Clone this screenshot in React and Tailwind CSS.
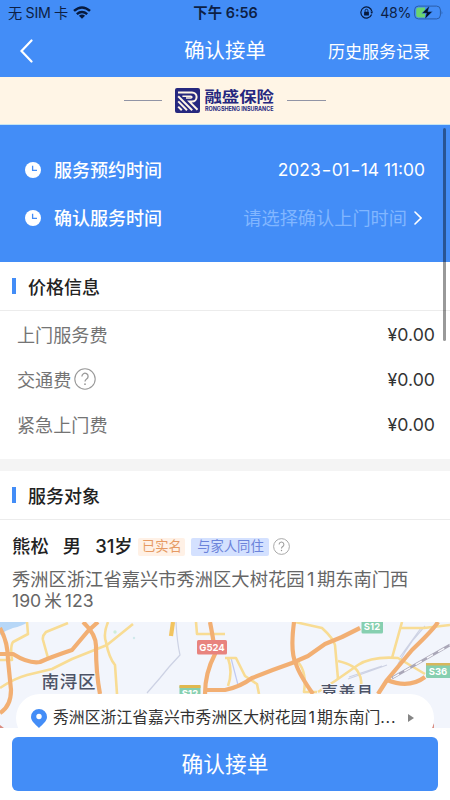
function StatusBar() {
  return (
    <div className="grid grid-cols-3 items-center h-[26px] pl-2 pr-[7px] text-[#0d1f45]">
      <div className="flex items-center">
        <span className="w-[65px] text-[14.2px] tracking-[-0.3px] whitespace-nowrap">无 SIM 卡</span>
        <svg viewBox="0 0 18 13" className="w-[18px] h-[13px] shrink-0" fill="none" stroke="#071a3d" strokeWidth="2.5">
          <path d="M1 4.9Q9 -2 17 4.9" />
          <path d="M3.8 8.1Q9 3.8 14.2 8.1" />
          <path d="M9 12.8L5.9 9.7Q9 7.4 12.1 9.7Z" fill="#071a3d" stroke="none" />
        </svg>
      </div>
      <div className="text-center text-[14.4px] font-semibold whitespace-nowrap">下午 6:56</div>
      <div className="flex items-center justify-end">
        <svg viewBox="0 0 14 14" className="w-[13px] h-[13px] mr-[7px]" fill="none" stroke="#071a3d" strokeWidth="1.3">
          <path d="M12.5 9.2A6 6 0 1 1 12.8 5.7" />
          <path d="M11 6.2L12.9 8.6L14 5.8Z" fill="#071a3d" stroke="none" />
          <rect x="4.4" y="6.2" width="5.2" height="4" rx=".6" fill="#071a3d" stroke="none" />
          <path d="M5.5 6.3V5A1.5 1.5 0 0 1 8.5 5V6.3" strokeWidth="1" />
        </svg>
        <span className="text-[14.2px] tracking-[-0.4px] mr-[3px]">48%</span>
        <svg viewBox="0 0 29 15" className="w-[29px] h-[15px]">
          <rect x=".6" y="1.1" width="25.8" height="12.8" rx="3.8" fill="none" stroke="#2a5da8" strokeWidth="1" />
          <path d="M5 2.6H11V12.4H5A2.5 2.5 0 0 1 2.2 9.8V5.2A2.5 2.5 0 0 1 5 2.6Z" fill="#6bd36f" />
          <path d="M27.6 5.5Q29 7.5 27.6 9.5Z" fill="#2a5da8" />
          <path d="M15.8 .6L7.8 8.3H12.4L10.6 14.4L18.6 6.6H13.9Z" fill="#061328" stroke="#438df7" strokeWidth=".5" />
        </svg>
      </div>
    </div>
  );
}

function Brand() {
  return (
    <div className="flex items-center justify-center h-[48px] bg-[#fff5e6] border-b border-[#c5e5f2]">
      <span className="w-[38px] h-px bg-[#9194a5] mr-[13px]" />
      {/* Logo: mark and word mark */}
      <svg viewBox="0 -6 103 37" className="w-[103px] h-[37px] -mr-1">
        <rect width="25" height="25" rx="2" fill="#26287f" />
        <g fill="none" stroke="#fff5e6" strokeWidth="2">
          <path d="M3 4.4H17A4.6 4.6 0 0 1 17 13.6H14.4L22.5 21.8" />
          <path d="M3.2 8.2L17.2 22.2" />
          <path d="M7.4 8.2H15.8Q18 9 15.8 10H11" strokeWidth="1.6" />
          <path d="M3.2 13.4L12 22.2" />
          <path d="M3.2 18.6L6.8 22.2" />
        </g>
        <g fill="#26287f" fontWeight="700">
          <text x="29.5" y="14" fontSize="14.6" textLength="69.5" lengthAdjust="spacingAndGlyphs">融盛保险</text>
          <text x="30" y="22.6" fontSize="5.6" textLength="68.5" lengthAdjust="spacingAndGlyphs">RONGSHENG INSURANCE</text>
        </g>
      </svg>
      <span className="w-[39px] h-px bg-[#9194a5] ml-[13px]" />
    </div>
  );
}

const FEES = [
  { label: "上门服务费", value: "¥0.00" },
  { label: "交通费", value: "¥0.00", help: true },
  { label: "紧急上门费", value: "¥0.00" },
];

function Clock() {
  return (
    <svg viewBox="0 0 16 16" className="w-4 h-4 mr-[13px]">
      <circle cx="8" cy="8" r="8" fill="#fff" />
      <path d="M7.6 3.8V8.4H12" fill="none" stroke="#438df7" strokeWidth="1.3" />
    </svg>
  );
}

function Help({ className }) {
  return (
    <svg viewBox="0 0 22 22" className={className} fill="none" stroke="#999" strokeWidth="1.1">
      <circle cx="11" cy="11" r="10.2" />
      <path d="M7.9 8.4A3.1 3.1 0 1 1 12.6 11Q11 12 11 13.6" strokeWidth="1.3" />
      <circle cx="11" cy="16.2" r=".9" fill="#999" stroke="none" />
    </svg>
  );
}

function SectionTitle({ children }) {
  return (
    <div className="flex items-center h-[49px] pl-3 border-b border-[#ececec] text-[18px] font-medium text-[#222]">
      <span className="w-[4px] h-4 mr-3 bg-[#438df7]" />
      <span className="pt-[3px]">{children}</span>
    </div>
  );
}

function MapCard() {
  return (
    <div className="relative h-[106px] overflow-hidden bg-[#f2f5fc]">
      <svg viewBox="0 0 450 106" className="block w-full h-[106px]">
        <path d="M0 0H28Q22 4 13 6Q6 8 0 13Z" fill="#b7d7f7" />
        <g fill="none" stroke="#cdd2e4" strokeWidth="1.2">
          <path d="M176 0Q177 20 180 33L169 45L160 56L147 71" />
          <path d="M425 4L413 18L405 30L398 42M421 6L400 35" />
          <path d="M348 57L387 43M349 55L382 44" />
          <path d="M231 36L238 63" stroke="#bfc9f2" />
        </g>
        <g fill="none" stroke="#f8dc94" strokeWidth="2.6" strokeLinejoin="round">
          <path d="M27 0L28 12L13 20Q10 24 12 38H0" />
          <path d="M68 1L46 10Q42 14 43 18L48 36" />
          <path d="M0 66Q15 56 27 53L52 47L72 37L107 23L133 2" />
          <path d="M108 0Q103 12 106 20Q109 36 115 43L117 72" />
          <path d="M196 0L197 12H225" />
          <path d="M225 36H236L245 54L257 62L259 72" />
          <path d="M228 36Q233 50 228 64" />
          <path d="M295 0L322 6Q333 16 335 23L338 57" />
          <path d="M298 40Q307 50 304 70H317" />
          <path d="M338 39Q356 43 359 52Q363 58 360 72" />
          <path d="M318 70L335 59L358 43Q372 34 398 36L425 52" />
          <path d="M402 0L392 36M400 6H424L450 3" />
        </g>
        <g fill="none" stroke="#f2af73" strokeWidth="4.2" strokeLinejoin="round">
          <path d="M0 6Q8 20 8 38L11 68Q11 84 0 91" />
          <path d="M0 32H13Q29 42 40 40Q51 35 72 28L88 9L98 0" />
          <path d="M83 0Q97 13 96 26Q96 51 100 72" />
          <path d="M173 0L171 14" stroke="#f2c45f" />
          <path d="M210 0Q215 26 215 32Q205 51 205 72" />
          <path d="M205 68H225Q240 65 252 56Q272 48 292 41L308 34L325 22L342 15L360 6" />
          <path d="M294 0Q290 30 296 42Q299 52 313 72" />
          <path d="M438 0Q434 7 412 28L387 58L378 72" />
          <path d="M387 58Q409 67 425 55" />
        </g>
        <path d="M392 56L450 23" stroke="#aaa7b8" strokeWidth="2.6" />
        <path d="M393 55.5L450 23" stroke="#f8f8fc" strokeWidth="1.4" strokeDasharray="7 6" />
        <circle cx="115" cy="10" r="1.7" fill="#cdeed9" />
        <circle cx="134" cy="16" r="1.2" fill="#cfe9ec" />
        <path d="M0 103L4 106H0ZM434 101L432 106H434Z" fill="#d98d82" />

        <rect x="197" y="18" width="30" height="14.5" rx="1.5" fill="#e8837e" />
        <rect x="361.5" y="-3" width="21.5" height="14.5" rx="1.5" fill="#86cfb0" />
        <rect x="426" y="41" width="26" height="15" rx="1.5" fill="#86cfb0" />
        <path d="M426 43.5V41H450V43.5Z" fill="#d7b75c" />
        <rect x="179.5" y="63" width="21" height="15" rx="1.5" fill="#86cfb0" />
        <path d="M179.5 66V63H200.5V66Z" fill="#e0b84f" />
        <g fill="#fff" fontSize="9.5" fontWeight="700" textAnchor="middle">
          <text x="212" y="28.8">G524</text>
          <text x="372" y="7.5">S12</text>
          <text x="438" y="53">S36</text>
          <text x="190" y="75">S12</text>
        </g>
        <g fill="#4d5468" stroke="#f4f6fc" strokeWidth="2" paintOrder="stroke" fontSize="17.5" fontWeight="500">
          <text x="41.5" y="66" textLength="54">南浔区</text>
          <text x="320.5" y="76.5" textLength="53">嘉善县</text>
        </g>
      </svg>
      <div className="absolute left-4 top-[72px] flex items-center w-[418px] h-[48px] pl-[15px] pr-[20px] rounded-full bg-white text-[15.85px] text-[#333]">
        <svg viewBox="0 0 16 19" className="w-4 h-[19px] mr-[6px] shrink-0">
          <path d="M8 0A8 8 0 0 1 16 8C16 12 12 15 8 19C4 15 0 12 0 8A8 8 0 0 1 8 0Z" fill="#438df7" />
          <circle cx="8" cy="7.5" r="2.7" fill="#fff" />
        </svg>
        <span className="whitespace-nowrap">
          秀洲区浙江省嘉兴市秀洲区大树花园<span className="px-[2px]">1</span>期东南门<span className="tracking-[0.7px]">...</span>
        </span>
        <svg viewBox="0 0 6 8" className="w-[6px] h-2 ml-auto">
          <path d="M0 0L6 4L0 8Z" fill="#858585" />
        </svg>
      </div>
    </div>
  );
}

export default function App() {
  return (
    <div className="relative flex flex-col w-[450px] h-[800px] overflow-hidden bg-white font-['Inter','Noto_Sans_CJK_SC',sans-serif]">
      <header className="h-[77px] bg-[#438df7]">
        <StatusBar />
        <div className="grid grid-cols-[1fr_auto_1fr] items-center h-[49px] px-5 text-white">
          <svg viewBox="0 0 13 24" className="w-[13px] h-6" fill="none" stroke="currentColor" strokeWidth="2.2" strokeLinecap="round">
            <path d="M11.5 1.5L1.5 12L11.5 22.5" />
          </svg>
          <h1 className="pt-[2px] text-[20.4px] whitespace-nowrap">确认接单</h1>
          <span className="pt-[4px] text-right text-[17px] whitespace-nowrap">历史服务记录</span>
        </div>
      </header>
      <Brand />

      {/* Appointment */}
      <section className="flex flex-col h-[137px] pt-[21px] pl-[25px] bg-[#438df7] text-[18px] text-white">
        <div className="flex items-center h-12 pr-[25px]">
          <Clock />
          <span className="font-medium">服务预约时间</span>
          <span className="ml-auto text-[17.4px]">
            2023<span className="inline-block scale-x-125 px-[1.5px]">-</span>01<span className="inline-block scale-x-125 px-[1.5px]">-</span>14 11:00
          </span>
        </div>
        <div className="flex items-center h-12 pr-[28px]">
          <Clock />
          <span className="pt-px font-medium">确认服务时间</span>
          <span className="ml-auto pt-px text-[18.2px] text-[#81b6ff]">请选择确认上门时间</span>
          <svg viewBox="0 0 8 14" className="w-2 h-[14px] ml-[7px]" fill="none" stroke="currentColor" strokeWidth="1.6" strokeLinecap="round">
            <path d="M1 1L7 7L1 13" />
          </svg>
        </div>
      </section>

      {/* Fees */}
      <section className="h-[197px]">
        <SectionTitle>价格信息</SectionTitle>
        <div className="pt-[1px] pl-[17px] pr-[15px]">
          {FEES.map(({ label, value, help }) => (
            <div key={label} className="flex items-center h-[45.3px] text-[18.1px] text-[#747474]">
              <span className="pt-px">{label}</span>
              {help && <Help className="w-[22px] h-[22px] ml-[3px] -mt-px" />}
              <span className="ml-auto pt-px text-[17.7px] text-[#333]">{value}</span>
            </div>
          ))}
        </div>
      </section>
      <div className="h-3 bg-[#f4f4f4]" />

      {/* Client */}
      <section className="h-[151px]">
        <SectionTitle>服务对象</SectionTitle>
        <div className="flex items-center h-[53px] pl-3 text-[18.4px] font-medium text-[#222] whitespace-nowrap">
          <span className="pt-px mr-[14px]">熊松</span>
          <span className="pt-px mr-[14px]">男</span>
          <span className="pt-px tracking-[-0.1px]">31岁</span>
          <span className="flex items-center justify-center w-[47px] h-[18px] pt-px ml-[6px] rounded-[2px] bg-[#fff1e6] text-[13.3px] font-normal text-[#e69a63]">已实名</span>
          <span className="flex items-center justify-center w-[78px] h-[18px] pt-px ml-[6px] rounded-[2px] bg-[#d4e1ff] text-[13.3px] font-normal text-[#6b83da]">与家人同住</span>
          <Help className="w-[17px] h-[17px] ml-1" />
        </div>
        <p className="-mt-[4px] pl-3 text-[18.3px] leading-[21px] text-[#666] whitespace-nowrap">
          秀洲区浙江省嘉兴市秀洲区大树花园<span className="px-[2.5px]">1</span>期东南门西
          <br />
          <span className="text-[17.6px]">190<span className="px-[3px]">米</span>123</span>
        </p>
      </section>
      <MapCard />

      <div className="px-3 pt-[9px] bg-white">
        <button className="w-full h-[54px] rounded-[6px] bg-[#438df7] text-[21.7px] text-white">确认接单</button>
      </div>

      {/* Scroll thumb */}
      <div className="absolute left-[443px] top-[128px] w-[3px] h-[213px] rounded-full bg-black/40" />
    </div>
  );
}
